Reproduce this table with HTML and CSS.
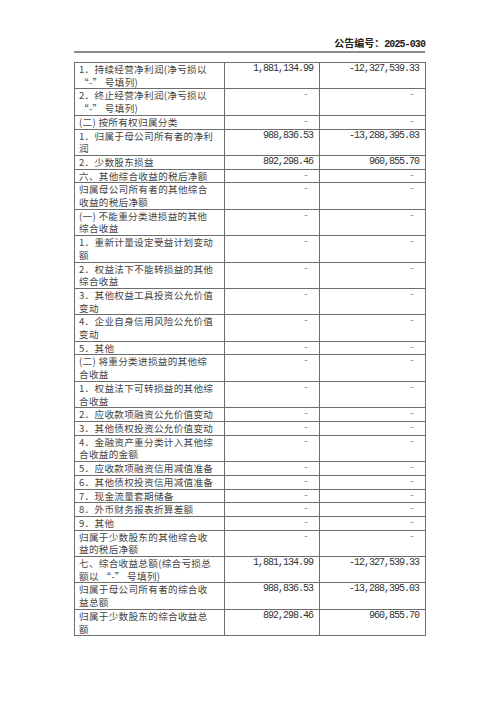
FILE: index.html
```html
<!DOCTYPE html>
<html lang="zh-CN">
<head>
<meta charset="utf-8">
<title>公告编号：2025-030</title>
<link rel="stylesheet" href="styles.css">
</head>
<body>
<div class="page">
  <div class="doc-header"><span class="hd-cjk">公告编号：</span><span class="hd-num">2025-030</span></div>
  <table class="fin">
    <colgroup><col class="c1"><col class="c2"><col class="c3"></colgroup>
    <tbody>
      <tr><td class="label">1．持续经营净利润(净亏损以<br>“-” 号填列)</td><td class="num">1,881,134.99</td><td class="num">-12,327,539.33</td></tr>
      <tr><td class="label">2．终止经营净利润(净亏损以<br>“-” 号填列)</td><td class="num nil">-</td><td class="num nil">-</td></tr>
      <tr><td class="label">(二) 按所有权归属分类</td><td class="num nil">-</td><td class="num nil">-</td></tr>
      <tr><td class="label">1．归属于母公司所有者的净利<br>润</td><td class="num">988,836.53</td><td class="num">-13,288,395.03</td></tr>
      <tr><td class="label">2．少数股东损益</td><td class="num">892,298.46</td><td class="num">960,855.70</td></tr>
      <tr><td class="label">六、其他综合收益的税后净额</td><td class="num nil">-</td><td class="num nil">-</td></tr>
      <tr><td class="label">归属母公司所有者的其他综合<br>收益的税后净额</td><td class="num nil">-</td><td class="num nil">-</td></tr>
      <tr><td class="label">(一) 不能重分类进损益的其他<br>综合收益</td><td class="num nil">-</td><td class="num nil">-</td></tr>
      <tr><td class="label">1．重新计量设定受益计划变动<br>额</td><td class="num nil">-</td><td class="num nil">-</td></tr>
      <tr><td class="label">2．权益法下不能转损益的其他<br>综合收益</td><td class="num nil">-</td><td class="num nil">-</td></tr>
      <tr><td class="label">3．其他权益工具投资公允价值<br>变动</td><td class="num nil">-</td><td class="num nil">-</td></tr>
      <tr><td class="label">4．企业自身信用风险公允价值<br>变动</td><td class="num nil">-</td><td class="num nil">-</td></tr>
      <tr><td class="label">5．其他</td><td class="num nil">-</td><td class="num nil">-</td></tr>
      <tr><td class="label">(二) 将重分类进损益的其他综<br>合收益</td><td class="num nil">-</td><td class="num nil">-</td></tr>
      <tr><td class="label">1．权益法下可转损益的其他综<br>合收益</td><td class="num nil">-</td><td class="num nil">-</td></tr>
      <tr><td class="label">2．应收款项融资公允价值变动</td><td class="num nil">-</td><td class="num nil">-</td></tr>
      <tr><td class="label">3．其他债权投资公允价值变动</td><td class="num nil">-</td><td class="num nil">-</td></tr>
      <tr><td class="label">4．金融资产重分类计入其他综<br>合收益的金额</td><td class="num nil">-</td><td class="num nil">-</td></tr>
      <tr><td class="label">5．应收款项融资信用减值准备</td><td class="num nil">-</td><td class="num nil">-</td></tr>
      <tr><td class="label">6．其他债权投资信用减值准备</td><td class="num nil">-</td><td class="num nil">-</td></tr>
      <tr><td class="label">7．现金流量套期储备</td><td class="num nil">-</td><td class="num nil">-</td></tr>
      <tr><td class="label">8．外币财务报表折算差额</td><td class="num nil">-</td><td class="num nil">-</td></tr>
      <tr><td class="label">9．其他</td><td class="num nil">-</td><td class="num nil">-</td></tr>
      <tr><td class="label">归属于少数股东的其他综合收<br>益的税后净额</td><td class="num nil">-</td><td class="num nil">-</td></tr>
      <tr><td class="label">七、综合收益总额(综合亏损总<br>额以 “-” 号填列)</td><td class="num">1,881,134.99</td><td class="num">-12,327,539.33</td></tr>
      <tr><td class="label">归属于母公司所有者的综合收<br>益总额</td><td class="num">988,836.53</td><td class="num">-13,288,395.03</td></tr>
      <tr><td class="label">归属于少数股东的综合收益总<br>额</td><td class="num">892,298.46</td><td class="num">960,855.70</td></tr>
    </tbody>
  </table>
</div>
</body>
</html>
```
FILE: styles.css
```css
html, body {
  margin: 0;
  padding: 0;
  background: #ffffff;
}

body {
  color: #444444;
  font-family: "Noto Sans CJK SC", "Noto Sans", sans-serif;
}

.page {
  width: 351px;
  margin-left: 74px;
  padding-top: 36px;
}

.doc-header {
  display: flex;
  justify-content: flex-end;
  align-items: baseline;
  font-weight: 700;
  line-height: 13px;
  color: #222222;
  border-bottom: 2px solid #8c8c8c;
}

.hd-cjk {
  font-family: "Noto Sans CJK SC", sans-serif;
  font-size: 10px;
}

.hd-num {
  font-family: "Liberation Mono", "DejaVu Sans Mono", monospace;
  font-size: 10px;
  letter-spacing: -0.9px;
}

.fin {
  margin-top: 9px;
  width: 351px;
  border-collapse: collapse;
  table-layout: fixed;
}

.c1 { width: 150px; }
.c2 { width: 95px; }
.c3 { width: 106px; }

.fin td {
  border: 1px solid #6e6e6e;
  padding: 0 6px 0 4px;
  line-height: 12.7px;
  vertical-align: top;
}

.fin td.label {
  font-size: 9.6px;
  letter-spacing: 0.3px;
  white-space: nowrap;
  padding-right: 0;
}

.num {
  font-family: "Liberation Mono", "DejaVu Sans Mono", monospace;
  font-size: 10px;
  letter-spacing: -1px;
  text-align: right;
  white-space: nowrap;
  color: #333333;
}

.fin td.nil {
  color: #9a9a9a;
  padding-right: 11px;
}
```
